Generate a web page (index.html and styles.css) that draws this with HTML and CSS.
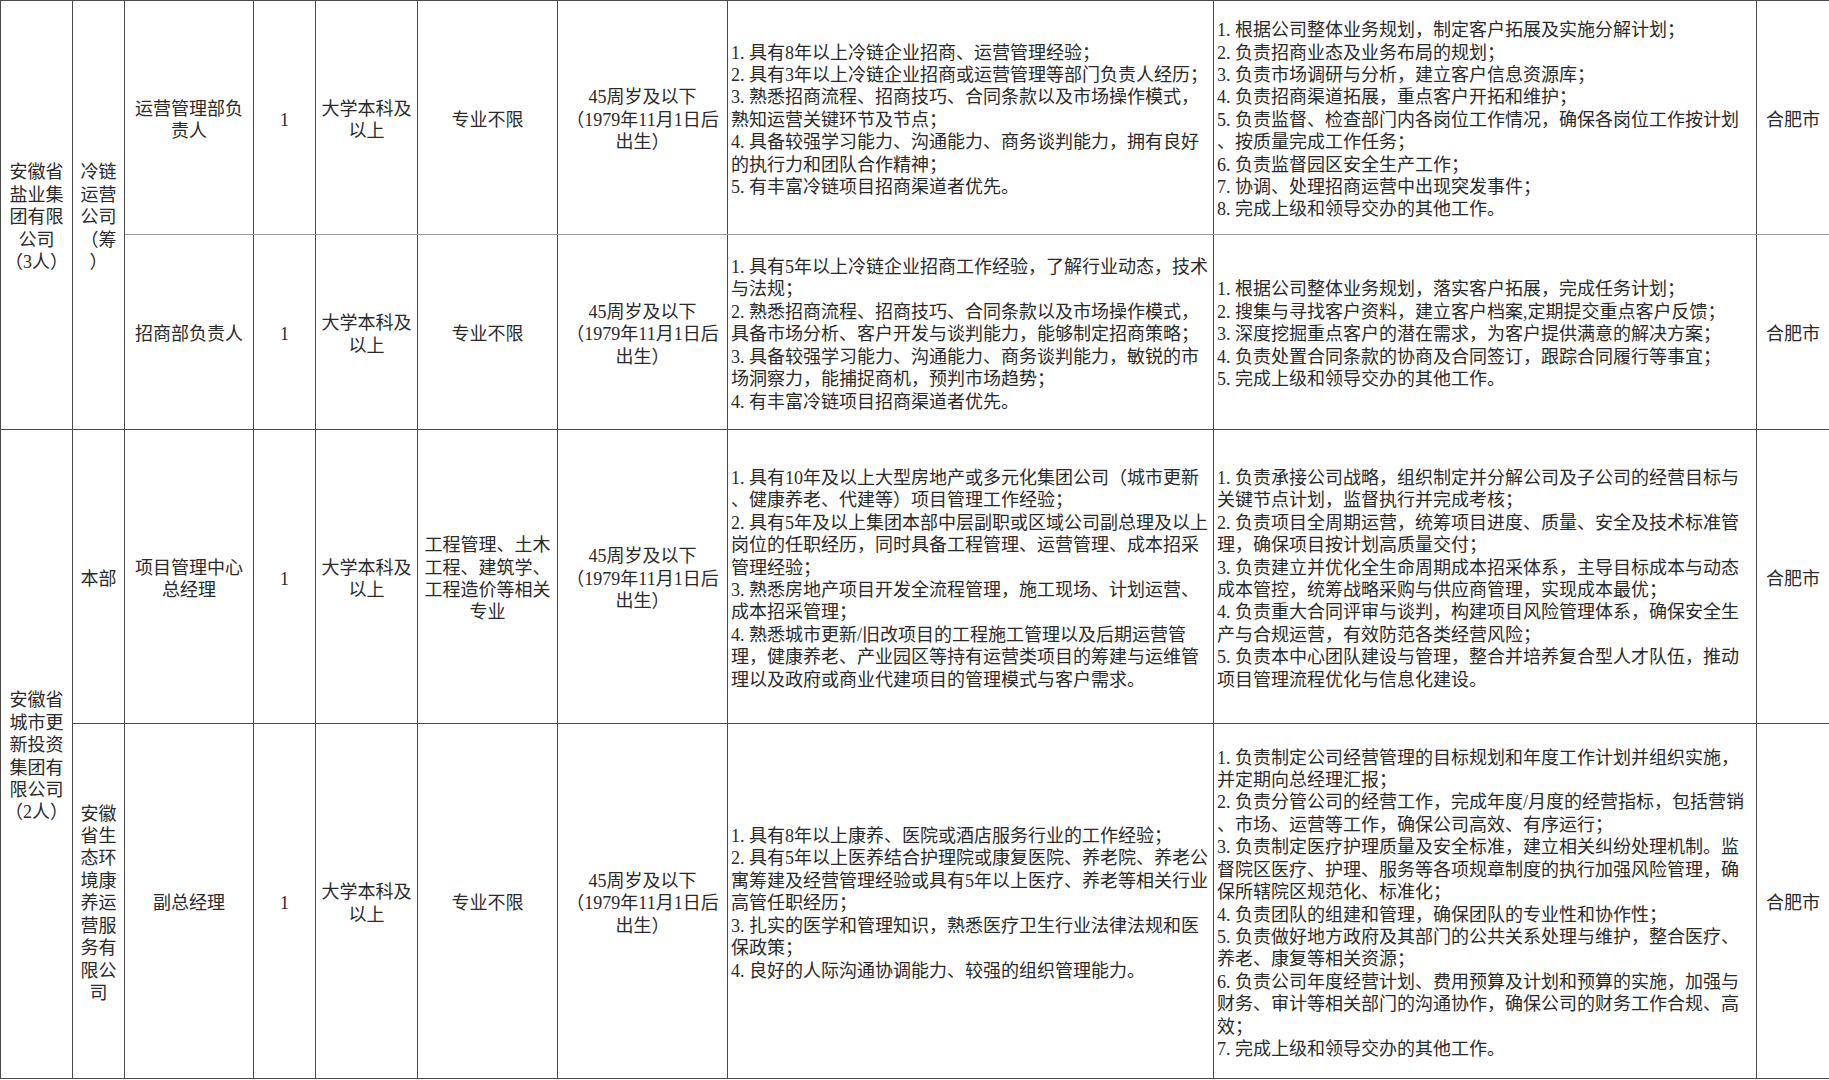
FILE: index.html
```html
<!DOCTYPE html>
<html lang="zh-CN">
<head>
<meta charset="utf-8">
<title>招聘岗位表</title>
<link rel="stylesheet" href="styles.css">
</head>
<body>
<table class="jobs">
  <colgroup>
    <col class="c-org"><col class="c-unit"><col class="c-post"><col class="c-num"><col class="c-edu"><col class="c-major"><col class="c-age"><col class="c-req"><col class="c-duty"><col class="c-place">
  </colgroup>
  <tbody>
    <tr class="r1">
      <td class="ctr" rowspan="2">安徽省<br>盐业集<br>团有限<br>公司<br>（3人）</td>
      <td class="ctr" rowspan="2">冷链<br>运营<br>公司<br>（筹<br>）</td>
      <td class="ctr sep">运营管理部负<br>责人</td>
      <td class="ctr sep">1</td>
      <td class="ctr sep">大学本科及<br>以上</td>
      <td class="ctr sep">专业不限</td>
      <td class="ctr sep">45周岁及以下<br>（1979年11月1日后<br>出生）</td>
      <td class="txt sep">1. 具有8年以上冷链企业招商、运营管理经验；<br>2. 具有3年以上冷链企业招商或运营管理等部门负责人经历；<br>3. 熟悉招商流程、招商技巧、合同条款以及市场操作模式，<br>熟知运营关键环节及节点；<br>4. 具备较强学习能力、沟通能力、商务谈判能力，拥有良好<br>的执行力和团队合作精神；<br>5. 有丰富冷链项目招商渠道者优先。</td>
      <td class="txt sep">1. 根据公司整体业务规划，制定客户拓展及实施分解计划；<br>2. 负责招商业态及业务布局的规划；<br>3. 负责市场调研与分析，建立客户信息资源库；<br>4. 负责招商渠道拓展，重点客户开拓和维护；<br>5. 负责监督、检查部门内各岗位工作情况，确保各岗位工作按计划<br>、按质量完成工作任务；<br>6. 负责监督园区安全生产工作；<br>7. 协调、处理招商运营中出现突发事件；<br>8. 完成上级和领导交办的其他工作。</td>
      <td class="ctr sep">合肥市</td>
    </tr>
    <tr class="r2">
      <td class="ctr">招商部负责人</td>
      <td class="ctr">1</td>
      <td class="ctr">大学本科及<br>以上</td>
      <td class="ctr">专业不限</td>
      <td class="ctr">45周岁及以下<br>（1979年11月1日后<br>出生）</td>
      <td class="txt">1. 具有5年以上冷链企业招商工作经验，了解行业动态，技术<br>与法规；<br>2. 熟悉招商流程、招商技巧、合同条款以及市场操作模式，<br>具备市场分析、客户开发与谈判能力，能够制定招商策略；<br>3. 具备较强学习能力、沟通能力、商务谈判能力，敏锐的市<br>场洞察力，能捕捉商机，预判市场趋势；<br>4. 有丰富冷链项目招商渠道者优先。</td>
      <td class="txt">1. 根据公司整体业务规划，落实客户拓展，完成任务计划；<br>2. 搜集与寻找客户资料，建立客户档案,定期提交重点客户反馈；<br>3. 深度挖掘重点客户的潜在需求，为客户提供满意的解决方案；<br>4. 负责处置合同条款的协商及合同签订，跟踪合同履行等事宜；<br>5. 完成上级和领导交办的其他工作。</td>
      <td class="ctr">合肥市</td>
    </tr>
    <tr class="r3">
      <td class="ctr" rowspan="2">安徽省<br>城市更<br>新投资<br>集团有<br>限公司<br>（2人）</td>
      <td class="ctr">本部</td>
      <td class="ctr">项目管理中心<br>总经理</td>
      <td class="ctr">1</td>
      <td class="ctr">大学本科及<br>以上</td>
      <td class="ctr">工程管理、土木<br>工程、建筑学、<br>工程造价等相关<br>专业</td>
      <td class="ctr">45周岁及以下<br>（1979年11月1日后<br>出生）</td>
      <td class="txt">1. 具有10年及以上大型房地产或多元化集团公司（城市更新<br>、健康养老、代建等）项目管理工作经验；<br>2. 具有5年及以上集团本部中层副职或区域公司副总理及以上<br>岗位的任职经历，同时具备工程管理、运营管理、成本招采<br>管理经验；<br>3. 熟悉房地产项目开发全流程管理，施工现场、计划运营、<br>成本招采管理；<br>4. 熟悉城市更新/旧改项目的工程施工管理以及后期运营管<br>理，健康养老、产业园区等持有运营类项目的筹建与运维管<br>理以及政府或商业代建项目的管理模式与客户需求。</td>
      <td class="txt">1. 负责承接公司战略，组织制定并分解公司及子公司的经营目标与<br>关键节点计划，监督执行并完成考核；<br>2. 负责项目全周期运营，统筹项目进度、质量、安全及技术标准管<br>理，确保项目按计划高质量交付；<br>3. 负责建立并优化全生命周期成本招采体系，主导目标成本与动态<br>成本管控，统筹战略采购与供应商管理，实现成本最优；<br>4. 负责重大合同评审与谈判，构建项目风险管理体系，确保安全生<br>产与合规运营，有效防范各类经营风险；<br>5. 负责本中心团队建设与管理，整合并培养复合型人才队伍，推动<br>项目管理流程优化与信息化建设。</td>
      <td class="ctr">合肥市</td>
    </tr>
    <tr class="r4">
      <td class="ctr">安徽<br>省生<br>态环<br>境康<br>养运<br>营服<br>务有<br>限公<br>司</td>
      <td class="ctr">副总经理</td>
      <td class="ctr">1</td>
      <td class="ctr">大学本科及<br>以上</td>
      <td class="ctr">专业不限</td>
      <td class="ctr">45周岁及以下<br>（1979年11月1日后<br>出生）</td>
      <td class="txt">1. 具有8年以上康养、医院或酒店服务行业的工作经验；<br>2. 具有5年以上医养结合护理院或康复医院、养老院、养老公<br>寓筹建及经营管理经验或具有5年以上医疗、养老等相关行业<br>高管任职经历；<br>3. 扎实的医学和管理知识，熟悉医疗卫生行业法律法规和医<br>保政策；<br>4. 良好的人际沟通协调能力、较强的组织管理能力。</td>
      <td class="txt">1. 负责制定公司经营管理的目标规划和年度工作计划并组织实施，<br>并定期向总经理汇报；<br>2. 负责分管公司的经营工作，完成年度/月度的经营指标，包括营销<br>、市场、运营等工作，确保公司高效、有序运行；<br>3. 负责制定医疗护理质量及安全标准，建立相关纠纷处理机制。监<br>督院区医疗、护理、服务等各项规章制度的执行加强风险管理，确<br>保所辖院区规范化、标准化；<br>4. 负责团队的组建和管理，确保团队的专业性和协作性；<br>5. 负责做好地方政府及其部门的公共关系处理与维护，整合医疗、<br>养老、康复等相关资源；<br>6. 负责公司年度经营计划、费用预算及计划和预算的实施，加强与<br>财务、审计等相关部门的沟通协作，确保公司的财务工作合规、高<br>效；<br>7. 完成上级和领导交办的其他工作。</td>
      <td class="ctr">合肥市</td>
    </tr>
  </tbody>
</table>
</body>
</html>
```
FILE: styles.css
```css
html, body {
  margin: 0;
  padding: 0;
  background: #ffffff;
}

.jobs {
  width: 1829px;
  table-layout: fixed;
  border-collapse: collapse;
  font-family: "Liberation Serif", "Noto Sans CJK SC", serif;
  font-size: 18px;
  line-height: 22.4px;
  color: #2a2a2a;
}

.c-org { width: 72px; }
.c-unit { width: 52px; }
.c-post { width: 129px; }
.c-num { width: 62px; }
.c-edu { width: 102px; }
.c-major { width: 140px; }
.c-age { width: 170px; }
.c-req { width: 486px; }
.c-duty { width: 543px; }
.c-place { width: 73px; }

.jobs td {
  border: 1px solid #4a4a4a;
  padding: 5px 2px 0 2px;
  vertical-align: middle;
  white-space: nowrap;
  overflow: visible;
}

.jobs td.sep {
  border-bottom-color: #9a9a9a;
}

.r1 { height: 234px; }
.r2 { height: 195px; }
.r3 { height: 294px; }
.r4 { height: 355px; }

.ctr {
  text-align: center;
}

.txt {
  text-align: left;
}

.jobs td.txt {
  padding-left: 3px;
}
```
